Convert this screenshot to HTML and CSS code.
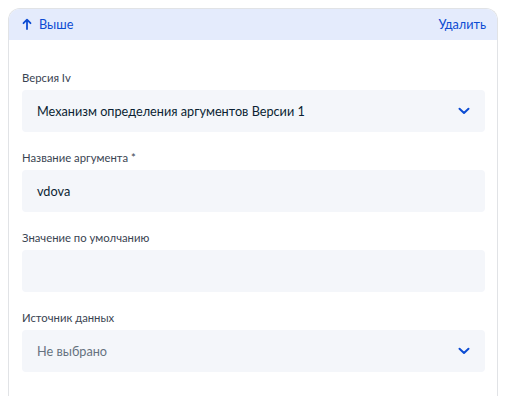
FILE: index.html
```html
<!DOCTYPE html>
<html lang="ru">
<head>
<meta charset="utf-8">
<link rel="stylesheet" href="styles.css">
</head>
<body>
<div class="card">
  <div class="card-header">
    <button class="link up"><svg class="arrow" width="10" height="12" viewBox="0 0 10 12"><path d="M5 11V2M1.5 5.2L5 1.7 8.5 5.2" fill="none" stroke="currentColor" stroke-width="1.8" stroke-linecap="round" stroke-linejoin="round"/></svg>Выше</button>
    <button class="link">Удалить</button>
  </div>
  <div class="card-body">
    <div class="field">
      <div class="label">Версия Iv</div>
      <div class="input select"><span>Механизм определения аргументов Версии 1</span><svg class="chev" width="12" height="8" viewBox="0 0 12 8"><path d="M1.5 1.8L6 6 10.5 1.8" fill="none" stroke="currentColor" stroke-width="2" stroke-linecap="round" stroke-linejoin="round"/></svg></div>
    </div>
    <div class="field">
      <div class="label">Название аргумента *</div>
      <div class="input"><span>vdova</span></div>
    </div>
    <div class="field">
      <div class="label">Значение по умолчанию</div>
      <div class="input"></div>
    </div>
    <div class="field">
      <div class="label">Источник данных</div>
      <div class="input select"><span class="placeholder">Не выбрано</span><svg class="chev" width="12" height="8" viewBox="0 0 12 8"><path d="M1.5 1.8L6 6 10.5 1.8" fill="none" stroke="currentColor" stroke-width="2" stroke-linecap="round" stroke-linejoin="round"/></svg></div>
    </div>
  </div>
</div>
</body>
</html>
```
FILE: styles.css
```css
* { box-sizing: border-box; }
body {
  margin: 8px;
  font-family: Lato, "Noto Sans", sans-serif;
  color: #0b1f33;
  background: #fff;
}
.card {
  width: 490px;
  height: 388px;
  border: 1px solid #e1e3e6;
  border-bottom: 0;
  border-radius: 12px 12px 0 0;
  overflow: hidden;
}
.card-header {
  height: 32px;
  background: #e4ebfc;
  display: flex;
  align-items: center;
  justify-content: space-between;
  padding: 0 12px 0 14px;
  margin: -1px -1px 0 -1px;
}
.link {
  border: 0;
  background: none;
  padding: 0;
  font-family: inherit;
  font-size: 12.7px;
  color: #0d4cd3;
  display: flex;
  align-items: center;
  cursor: pointer;
}
.arrow { margin-right: 7px; }
.card-body {
  padding: 30px 12px 0 13px;
  display: flex;
  flex-direction: column;
  gap: 18px;
}
.label {
  font-size: 11.3px;
  line-height: 16px;
  color: #3a4452;
  margin-bottom: 4px;
}
.input {
  height: 42px;
  background: #f4f6fa;
  border-radius: 4px;
  display: flex;
  align-items: center;
  justify-content: space-between;
  padding: 0 15px 0 15px;
  font-size: 12.7px;
  color: #0b1f33;
}
.placeholder { color: #66727f; }
.chev { color: #0d4cd3; }
```
